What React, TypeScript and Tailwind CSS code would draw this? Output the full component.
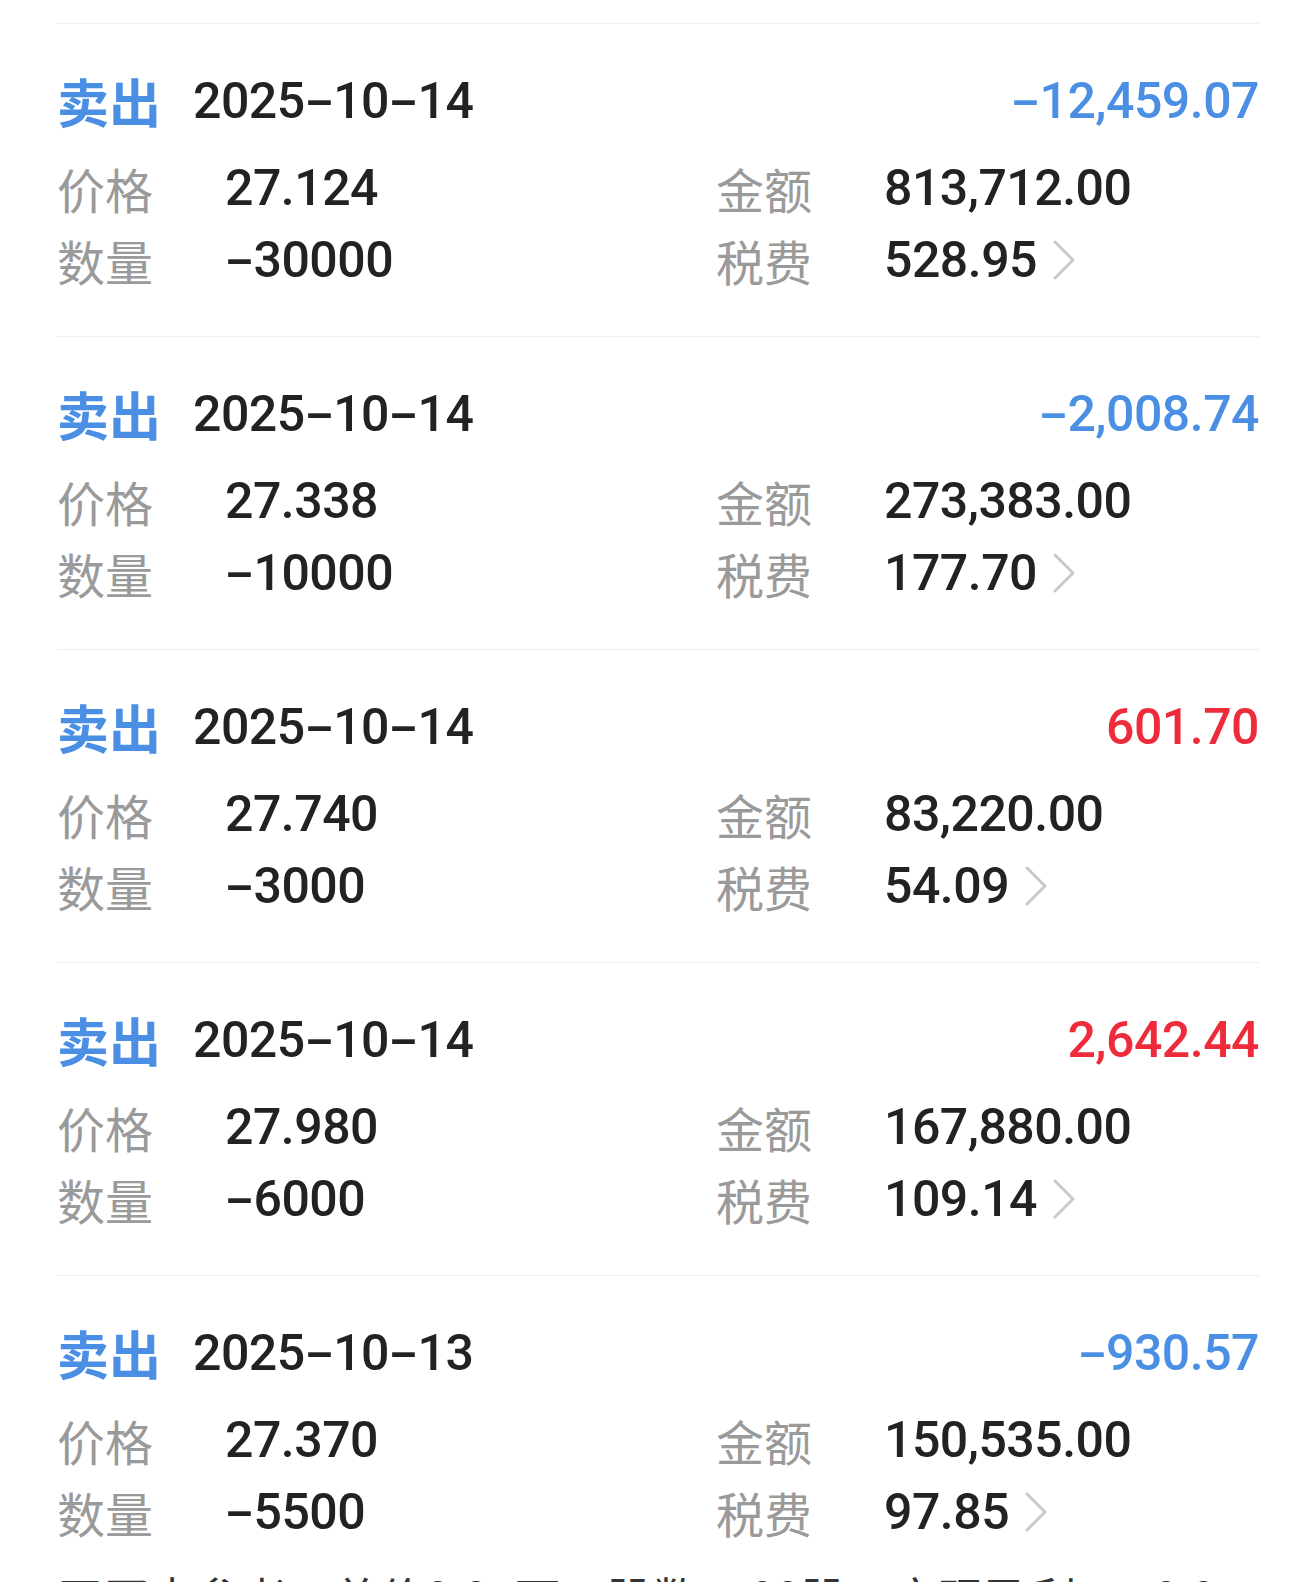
const trades = [
  { date: "2025-10-14", pnl: "-12,459.07", up: false, price: "27.124", qty: "-30000", amount: "813,712.00", fee: "528.95" },
  { date: "2025-10-14", pnl: "-2,008.74", up: false, price: "27.338", qty: "-10000", amount: "273,383.00", fee: "177.70" },
  { date: "2025-10-14", pnl: "601.70", up: true, price: "27.740", qty: "-3000", amount: "83,220.00", fee: "54.09" },
  { date: "2025-10-14", pnl: "2,642.44", up: true, price: "27.980", qty: "-6000", amount: "167,880.00", fee: "109.14" },
  { date: "2025-10-13", pnl: "-930.57", up: false, price: "27.370", qty: "-5500", amount: "150,535.00", fee: "97.85" },
];

const cjk = "font-['Noto_Sans_CJK_SC',sans-serif]";
const num = "font-['Roboto','Noto_Sans_CJK_SC',sans-serif] font-medium text-[50px] leading-none tracking-[-0.5px]";

// the app's font draws the hyphen as a long dash, Roboto's is short
function Num({ text }: { text: string }) {
  const parts = text.split("-");
  return (
    <>
      {parts.map((p, i) => (
        <span key={i}>
          {i > 0 && <span className="inline-block mx-[6px] scale-x-[1.75]">-</span>}
          {p}
        </span>
      ))}
    </>
  );
}

function Chevron() {
  return (
    <svg className="ml-[15px] w-[24px] h-[40px]" viewBox="0 0 24 40" fill="none">
      <polyline points="3,2 21,20 3,38" stroke="#c9c9c9" strokeWidth={3} strokeLinecap="round" strokeLinejoin="round" />
    </svg>
  );
}

function Field({ label, value, chevron }: { label: string; value: string; chevron?: boolean }) {
  return (
    <div className="flex items-center h-[72px]">
      <span className={`${cjk} w-[168px] text-[48px] leading-none text-[#9a9a9a]`}>{label}</span>
      <span className={`${num} text-[#222222]`}>
        <Num text={value} />
      </span>
      {chevron && <Chevron />}
    </div>
  );
}

export default function App() {
  return (
    <div className="min-h-screen bg-white pt-[23px] px-[57px]">
      {trades.map((t, i) => (
        <div key={i} className={`border-t border-[#eeeeee] pt-[47px] ${i < trades.length - 1 ? "pb-[40px]" : "pb-[18px]"}`}>
          {/* header */}
          <div className="flex items-center h-[60px]">
            <span className={`${cjk} text-[52px] leading-none font-bold text-[#4a8fe3]`}>卖出</span>
            <span className={`${num} ml-[32px] text-[#222222]`}>
              <Num text={t.date} />
            </span>
            <span className={`${num} ml-auto ${t.up ? "text-[#ee2b3b]" : "text-[#4a8fe3]"}`}>
              <Num text={t.pnl} />
            </span>
          </div>

          {/* details */}
          <div className="grid grid-cols-[659px_1fr] mt-[21px]">
            <div>
              <Field label="价格" value={t.price} />
              <Field label="数量" value={t.qty} />
            </div>
            <div>
              <Field label="金额" value={t.amount} />
              <Field label="税费" value={t.fee} chevron />
            </div>
          </div>
        </div>
      ))}
      <p className={`${cjk} text-[46px] leading-[60px] text-[#333333] whitespace-nowrap`}>
        ■买卖参考：总价0.01万，股数5500股，实现盈利1778.94
      </p>
    </div>
  );
}
